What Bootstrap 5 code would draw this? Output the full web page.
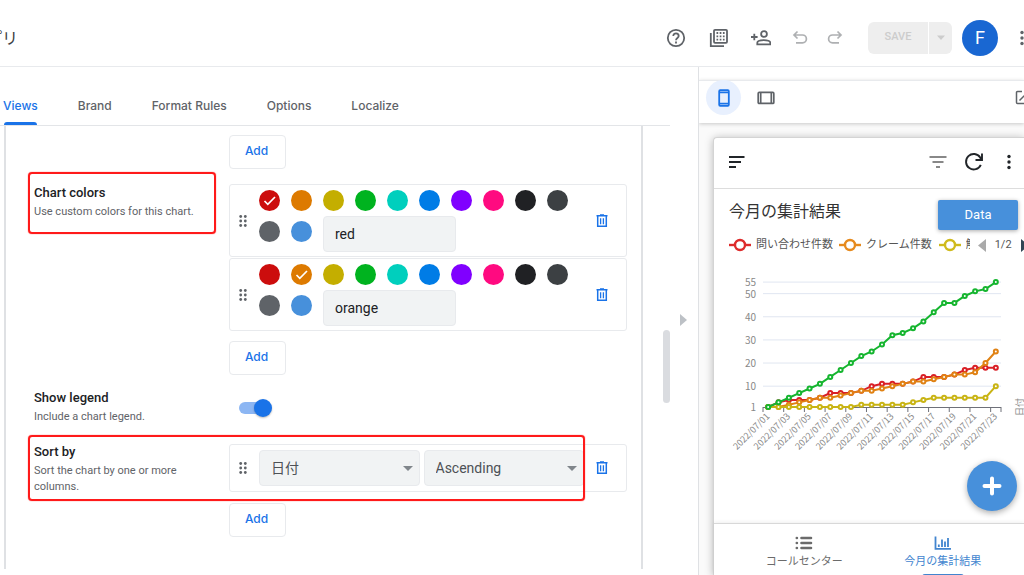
<!DOCTYPE html>
<html lang="ja">
<head>
<meta charset="utf-8">
<meta name="viewport" content="width=device-width, initial-scale=1">
<title>アプリ</title>
<link href="https://cdn.jsdelivr.net/npm/bootstrap@5.3.0/dist/css/bootstrap.min.css" rel="stylesheet">
<style>
  :root { --ink: #202124; --muted: #5f6368; --blue: #1a73e8; --line: #e8eaed; --app: #4790db; }
  body { font-family: Roboto, "Noto Sans CJK JP", sans-serif; color: var(--ink); font-size: 13px; background: #fff; }
  svg { display: block; flex: none; }
  .icon-btn { padding: 0; border: 0; background: none; color: var(--muted); line-height: 1; }
  .topbar { height: 67px; border-bottom: 1px solid var(--line); padding-top: 9px; }
  .app-title { width: 20px; font-size: 16px; color: #3c4043; padding: 2px 2px 0 0; }
  .save-btn { height: 32px; background: #eee; color: #ccc; font-size: 11px; font-weight: 500; border: 0; }
  .avatar { width: 36px; height: 36px; background: #1967d2; font-size: 18px; margin-left: 10px; border: 0; }

  .editor { min-width: 0; }
  .tabs { height: 59px; margin-right: 28px; border-bottom: 1px solid #e3e5e8; padding-top: 12px; }
  .tabs .nav-link { font: 500 12px/20px Inter, sans-serif; color: var(--muted); padding: 17px 0 9px; margin: 0 20px; position: relative; }
  .tabs .nav-item:first-child .nav-link { margin-left: 3px; }
  .tabs .nav-link.active { color: var(--blue); }
  .tabs .nav-link.active::after { content: ""; position: absolute; left: 1px; right: 1px; bottom: 0; height: 3px; background: var(--blue); border-radius: 3px 3px 0 0; }
  .panel { margin: 0 55px 6px 4px; border: solid #dfe1e4; border-width: 0 2px; padding: 9px 14px 32px 28px; }
  .setting-label { width: 195px; flex: none; }
  .setting-label h2 { font-size: 13px; line-height: 18px; font-weight: 500; margin: 0 0 2px; }
  .setting-label p { font-size: 11px; line-height: 16px; color: var(--muted); margin: 0; padding-right: 20px; }
  .add-btn { width: 57px; height: 34px; border: 1px solid var(--line); border-radius: 4px; background: #fff; color: var(--blue); font: 500 12px/20px Inter, sans-serif; padding: 0 2px 2px 0; }
  .item { border: 1px solid var(--line); border-radius: 3px; }
  .item + .item { margin-top: 1px; }
  .grip { width: 29px; flex: none; color: var(--muted); padding-left: 9px; }
  .swatches { width: 324px; padding-bottom: 4px; }
  .swatch { appearance: none; width: 21px; height: 21px; border-radius: 50%; margin: 5px 11px 5px 0; background: var(--c); }
  .swatch:checked { background: url("data:image/svg+xml,%3Csvg xmlns='http://www.w3.org/2000/svg' viewBox='0 0 21 21'%3E%3Cpath d='M5.5 11l3.300 3.300L16 7' fill='none' stroke='%23fff' stroke-width='1.700'/%3E%3C/svg%3E") center/21px, var(--c); }
  .field { height: 36px; background-color: #f1f3f4; border: 1px solid var(--line); border-radius: 4px; font-size: 14px; color: var(--ink); padding: 0 11px; }
  .color-name { width: 133px; }
  .select-box { flex: 1 1 0; min-width: 0; color: #4d5156; appearance: none; background-image: url("data:image/svg+xml,%3Csvg xmlns='http://www.w3.org/2000/svg' viewBox='0 0 10 5'%3E%3Cpath d='M0 0h10L5 5z' fill='%2380868b'/%3E%3C/svg%3E"); background-size: 10px 5px; background-repeat: no-repeat; background-position: right 6px center; }
  .trash { width: 24px; height: 24px; margin-right: 12px; color: var(--blue); }
  .toggle { appearance: none; width: 32px; height: 12px; border-radius: 6px; background: #8cb6f3; position: relative; margin: 2px 0 0 10px; }
  .toggle::before { content: ""; position: absolute; right: -1px; top: -3px; width: 18px; height: 18px; border-radius: 50%; background: var(--blue); box-shadow: 0 1px 2px #0004; }
  .callout { position: absolute; border: 2px solid #ff1a1a; border-radius: 4px; pointer-events: none; box-shadow: 0 0 1px #ff1a1a; }
  .callout-label { inset: -12px auto auto -6px; width: 188px; height: 62px; }
  .callout-row { inset: -8px 42px auto -6px; height: 66px; }
  .scroll-thumb { position: absolute; right: 28px; top: 263px; width: 7px; height: 73px; border-radius: 4px; background: #dadce0; }
  .collapse-arrow { position: absolute; right: 11px; top: 247px; color: #bdc1c6; }

  .preview { width: 326px; flex: none; border-left: 1px solid #dfe1e4; background: #fafafa; }
  .preview-bar { margin-top: 13px; height: 43px; border-top: 1px solid var(--line); padding: 0 0 9px 7px; background: #fff; box-shadow: 0 1px 4px #0003; position: relative; }
  .device-on { width: 35px; height: 35px; background: #e8f0fe; color: var(--blue); margin-right: 16px; }
  .phone { margin: 14px 0 0 14px; background: #fff; border: solid #d4d4d4; border-width: 1px 0 0 1px; border-radius: 4px 0 0 0; box-shadow: 0 1px 8px #0004; position: relative; }
  .phone-bar { height: 51px; border-bottom: 1px solid #ddd; padding: 0 12px 2px 15px; }
  .chart-title { font-size: 16px; line-height: 24px; font-weight: 400; color: #333; margin: 1px 0 0; }
  .data-btn { width: 80px; height: 30px; margin-top: 1px; background: var(--app); color: #fff; border: 0; border-radius: 2px; box-shadow: 0 1px 4px #0005; font-size: 13px; }
  .legend-row { font-size: 11px; line-height: 16px; color: #555; padding-left: 15px; }
  .legend-row svg { margin-right: 5px; }
  .clipped { width: 4px; overflow: hidden; }
  .chart { width: 100%; height: 261px; }
  .chart text { font: 10px "Noto Sans CJK JP", sans-serif; fill: #888; }
  .chart .date { font-size: 9px; }
  .fab { position: absolute; right: 7px; bottom: 64px; width: 50px; height: 50px; background: var(--app); border: 0; color: #fff; box-shadow: 0 2px 6px #0005; }
  .phone-tabs { border-top: 1px solid #d8d8d8; box-shadow: 0 -1px 4px #0001; padding: 0 12px 0 21px; height: 52px; }
  .phone-tabs a { flex: 1; text-decoration: none; color: #6b6b6b; font-size: 11px; line-height: 16px; padding-top: 11px; }
  .phone-tabs span { margin-top: 3px; }
  .phone-tabs a.current { color: #4285cf; }
  .phone-tabs a.current::after { content: ""; width: 42px; height: 3px; margin-top: 4px; background: currentColor; border-radius: 3px 3px 0 0; flex: none; }
</style>
</head>
<body class="vh-100 d-flex flex-column overflow-hidden">

<svg class="d-none">
  <symbol id="grip" viewBox="0 0 8 14"><g fill="currentColor"><circle cx="1.700" cy="2.500" r="1.400"/><circle cx="6.300" cy="2.500" r="1.400"/><circle cx="1.700" cy="7" r="1.400"/><circle cx="6.300" cy="7" r="1.400"/><circle cx="1.700" cy="11.500" r="1.400"/><circle cx="6.300" cy="11.500" r="1.400"/></g></symbol>
  <symbol id="trash" viewBox="0 0 12 14"><path d="M.5 1.700h11M4 .9h4M1.700 2v10.300h8.600V2" fill="none" stroke="currentColor" stroke-width="1.500"/><path d="M4.600 4.300v6M7.400 4.300v6" stroke="currentColor" stroke-width="1.300"/></symbol>
  <symbol id="dots" viewBox="0 0 6 16"><g fill="currentColor"><circle cx="3" cy="2.500" r="1.700"/><circle cx="3" cy="8" r="1.700"/><circle cx="3" cy="13.500" r="1.700"/></g></symbol>
</svg>

<header class="topbar d-flex align-items-center overflow-hidden flex-shrink-0">
  <div class="app-title d-flex justify-content-end overflow-hidden text-nowrap">アプリ</div>
  <div class="ms-auto d-flex align-items-center">
    <button class="icon-btn" aria-label="Help"><svg width="20" height="20" viewBox="0 0 20 20" fill="none" stroke="currentColor" stroke-width="1.800"><circle cx="10" cy="10" r="8.200"/><path d="M7.300 8c0-3.500 5.400-3.400 5.400 0 0 1.900-2.700 2-2.700 4.200M10 13.500v1.900"/></svg></button>
    <button class="icon-btn" aria-label="Data" style="margin-left:23px"><svg width="20" height="20" viewBox="0 0 20 20" fill="none" stroke="currentColor" stroke-width="1.800"><rect x="5" y="1.800" width="13" height="13" rx="1"/><path d="M1.800 5v13.200H15"/><path d="M7.500 5h9M7.500 8.300h9M7.500 11.600h9" stroke-dasharray="1.700 1.500"/></svg></button>
    <button class="icon-btn" aria-label="Share" style="margin-left:22px"><svg width="20" height="20" viewBox="0 0 20 20" fill="none" stroke="currentColor" stroke-width="1.800"><circle cx="13" cy="6" r="2.900"/><path d="M6.300 16.300v-1.500c0-3.700 13-3.700 13 0v1.500zM0 9h6.600M3.300 5.700v6.600"/></svg></button>
    <button class="icon-btn opacity-50" aria-label="Undo" style="margin-left:21px"><svg width="16" height="16" viewBox="0 0 16 16" fill="none" stroke="currentColor" stroke-width="1.700"><path d="M5.500 1.500L2 5l3.500 3.500M2 5h8.500a3.900 3.900 0 0 1 0 7.800H4"/></svg></button>
    <button class="icon-btn opacity-50" aria-label="Redo" style="margin-left:19px"><svg width="16" height="16" viewBox="0 0 16 16" fill="none" stroke="currentColor" stroke-width="1.700"><path d="M10.500 1.500L14 5l-3.500 3.500M14 5H5.500a3.900 3.900 0 0 0 0 7.800H12"/></svg></button>
    <div class="d-flex" style="margin-left:25px">
      <button class="save-btn rounded-start" style="width:60px">SAVE</button>
      <button class="save-btn rounded-end border-start border-white d-flex align-items-center justify-content-center" style="width:24px" aria-label="Save options"><svg width="8" height="5" viewBox="0 0 8 5"><path d="M0 .5h8L4 5z" fill="#ccc"/></svg></button>
    </div>
    <button class="avatar rounded-circle text-white p-0">F</button>
    <button class="icon-btn" aria-label="More" style="margin:0 -1px 0 21px"><svg width="6" height="16"><use href="#dots"/></svg></button>
  </div>
</header>

<div class="d-flex flex-grow-1 overflow-hidden">
  <main class="editor flex-grow-1 position-relative">
    <ul class="tabs nav flex-nowrap text-nowrap">
      <li class="nav-item"><a class="nav-link active" href="#">Views</a></li>
      <li class="nav-item"><a class="nav-link" href="#">Brand</a></li>
      <li class="nav-item"><a class="nav-link" href="#">Format Rules</a></li>
      <li class="nav-item"><a class="nav-link" href="#">Options</a></li>
      <li class="nav-item"><a class="nav-link" href="#">Localize</a></li>
    </ul>

    <div class="panel">
      <div class="d-flex"><div class="setting-label"></div><button class="add-btn">Add</button></div>

      <section class="d-flex position-relative" style="margin-top:15px">
        <div class="setting-label"><h2>Chart colors</h2><p class="text-nowrap">Use custom colors for this chart.</p></div>
        <div class="flex-grow-1">
          <div class="item d-flex align-items-center">
            <div class="grip"><svg width="8" height="14"><use href="#grip"/></svg></div>
            <div class="swatches d-flex flex-wrap align-items-start" data-picked="0"><input class="field color-name" aria-label="Color 1" value="red"></div>
            <button class="icon-btn trash ms-auto d-flex align-items-center justify-content-center" aria-label="Delete"><svg width="12" height="14"><use href="#trash"/></svg></button>
          </div>
          <div class="item d-flex align-items-center">
            <div class="grip"><svg width="8" height="14"><use href="#grip"/></svg></div>
            <div class="swatches d-flex flex-wrap align-items-start" data-picked="1"><input class="field color-name" aria-label="Color 2" value="orange"></div>
            <button class="icon-btn trash ms-auto d-flex align-items-center justify-content-center" aria-label="Delete"><svg width="12" height="14"><use href="#trash"/></svg></button>
          </div>
          <button class="add-btn d-block" style="margin-top:10px">Add</button>
        </div>
        <div class="callout callout-label"></div>
      </section>

      <section class="d-flex align-items-center" style="margin-top:14px">
        <div class="setting-label"><h2><label for="legend">Show legend</label></h2><p class="text-nowrap">Include a chart legend.</p></div>
        <input type="checkbox" role="switch" class="toggle" id="legend" checked>
      </section>

      <section class="d-flex position-relative" style="margin-top:18px">
        <div class="setting-label"><h2>Sort by</h2><p>Sort the chart by one or more columns.</p></div>
        <div class="flex-grow-1">
          <div class="item d-flex align-items-center" style="height:48px;margin-top:1px">
            <div class="grip"><svg width="8" height="14"><use href="#grip"/></svg></div>
            <div class="d-flex flex-grow-1 gap-1">
              <select class="field select-box" aria-label="Sort column"><option>日付</option></select>
              <select class="field select-box" aria-label="Sort order"><option>Ascending</option><option>Descending</option></select>
            </div>
            <button class="icon-btn trash d-flex align-items-center justify-content-center" style="margin-left:6px" aria-label="Delete"><svg width="12" height="14"><use href="#trash"/></svg></button>
          </div>
          <button class="add-btn d-block" style="margin-top:11px">Add</button>
        </div>
        <div class="callout callout-row"></div>
      </section>
    </div>
    <div class="scroll-thumb"></div>
    <button class="icon-btn collapse-arrow" aria-label="Collapse preview"><svg width="7" height="12" viewBox="0 0 7 12"><path d="M0 0v12l7-6z" fill="currentColor"/></svg></button>
  </main>

  <aside class="preview d-flex flex-column overflow-hidden">
    <div class="bg-white">
      <div class="preview-bar d-flex align-items-center">
        <button class="icon-btn device-on rounded-circle d-flex align-items-center justify-content-center" aria-label="Phone"><svg width="12" height="18" viewBox="0 0 12 18" fill="none" stroke="currentColor" stroke-width="1.800"><rect x="1.200" y="1.200" width="9.600" height="15.600" rx="1"/><path d="M1 3.300h10M1 14.700h10"/></svg></button>
        <button class="icon-btn" aria-label="Tablet"><svg width="18" height="14" viewBox="0 0 18 14" fill="none" stroke="currentColor" stroke-width="1.700"><rect x="1.200" y="1.400" width="15.600" height="11" rx="1"/><path d="M3.700 1v12M14.300 1v12"/></svg></button>
        <button class="icon-btn ms-auto" style="margin-right:-6px" aria-label="Open in new window"><svg width="15" height="15" viewBox="0 0 15 15" fill="none" stroke="currentColor" stroke-width="1.500"><path d="M7 1.500H2.500a1 1 0 0 0-1 1v10a1 1 0 0 0 1 1h10a1 1 0 0 0 1-1V8M4.500 10.500l9-9M9 1.500h4.500V6"/></svg></button>
      </div>
    </div>
    <div class="phone flex-grow-1 d-flex flex-column">
      <div class="phone-bar d-flex align-items-center">
        <button class="icon-btn text-dark" aria-label="Menu"><svg width="16" height="14" viewBox="0 0 16 14" stroke="currentColor" stroke-width="2"><path d="M0 2h15.500M0 7h12M0 12h7"/></svg></button>
        <button class="icon-btn ms-auto" aria-label="Filter"><svg width="18" height="14" viewBox="0 0 18 14" stroke="#888" stroke-width="2"><path d="M.5 2h17M3.500 7h11M7 12h4"/></svg></button>
        <button class="icon-btn text-dark" style="margin-left:17px" aria-label="Refresh"><svg width="20" height="20" viewBox="0 0 20 20" fill="none" stroke="currentColor" stroke-width="1.900"><path d="M16.800 12.800a7.700 7.700 0 1 1-.6-7.300L17.500 8M11.500 8h6.500V1.500"/></svg></button>
        <button class="icon-btn text-dark" style="margin-left:22px" aria-label="More"><svg width="6" height="16"><use href="#dots"/></svg></button>
      </div>
      <div class="d-flex justify-content-between" style="padding:10px 6px 0 15px">
        <h1 class="chart-title">今月の集計結果</h1>
        <button class="data-btn">Data</button>
      </div>
      <div class="legend-row d-flex align-items-center text-nowrap overflow-hidden" style="margin-top:7px">
        <svg width="22" height="14" viewBox="0 0 22 14" fill="#fff" stroke="#dd2b2b" stroke-width="2.400"><path d="M0 7h22"/><circle cx="11" cy="7" r="5"/></svg><span>問い合わせ件数</span>
        <svg style="margin-left:6px" width="22" height="14" viewBox="0 0 22 14" fill="#fff" stroke="#e68a1e" stroke-width="2.400"><path d="M0 7h22"/><circle cx="11" cy="7" r="5"/></svg><span>クレーム件数</span>
        <svg style="margin-left:7px" width="22" height="14" viewBox="0 0 22 14" fill="#fff" stroke="#cfba1c" stroke-width="2.400"><path d="M0 7h22"/><circle cx="11" cy="7" r="5"/></svg><span class="clipped flex-shrink-0">解</span>
        <svg style="margin:0 9px 0 8px" width="8" height="13" viewBox="0 0 8 13"><path d="M8 0v13L0 6.500z" fill="#aaa"/></svg><span class="flex-shrink-0">1/2</span>
        <svg style="margin:0 0 0 9px" width="8" height="13" viewBox="0 0 8 13"><path d="M0 0v13l8-6.500z" fill="#2f4554"/></svg>
      </div>
      <svg class="chart" id="chart" viewBox="714 253 310 261" preserveAspectRatio="xMinYMin meet" role="img" aria-label="今月の集計結果"></svg>
      <button class="fab rounded-circle d-flex align-items-center justify-content-center" aria-label="Add"><svg width="20" height="20" viewBox="0 0 20 20" stroke="currentColor" stroke-width="4" stroke-linecap="round"><path d="M10 2.500v15M2.500 10h15"/></svg></button>
      <nav class="phone-tabs d-flex mt-auto flex-shrink-0">
        <a href="#" class="d-flex flex-column align-items-center"><svg width="18" height="16" viewBox="0 0 18 16" stroke="currentColor" stroke-width="2.600" stroke-linecap="round"><path d="M6.500 3h9.500M6.500 8h9.500M6.500 13h9.500M1.800 3h.1M1.800 8h.1M1.800 13h.1"/></svg><span>コールセンター</span></a>
        <a href="#" class="current d-flex flex-column align-items-center"><svg width="18" height="16" viewBox="0 0 18 16" fill="none" stroke="currentColor" stroke-width="1.800"><path d="M1.500 1.500v12.300H17M4.800 12v-2.500M8 12V4.500M11 12V6.500M14 12V3"/></svg><span>今月の集計結果</span></a>
      </nav>
    </div>
  </aside>
</div>

<script src="https://cdn.jsdelivr.net/npm/bootstrap@5.3.0/dist/js/bootstrap.bundle.min.js"></script>
<script>
  // Colour palette offered for every series
  const palette = ['#cc0d0d', '#dd7a00', '#c4ae00', '#00b31f', '#00cfbd', '#007ce6', '#8000ff', '#ff0a80', '#202124', '#3c4043', '#5f6368', '#4790db'];
  document.querySelectorAll('.swatches').forEach((box, n) => {
    const html = palette.map((c, i) => `<input type="radio" class="swatch" name="series${n}" aria-label="${c}" style="--c:${c}"${i == box.dataset.picked ? ' checked' : ''}>`).join('');
    box.insertAdjacentHTML('afterbegin', html);
  });

  // Line chart
  const step = 238 / 23, x = i => 763 + step * (i + .5), y = v => 409.3 - 2.313 * v;
  const series = [
    ['#d91f26', [1,3,4,4,4,5,7,7,7,8,10,11,11,11,12,14,14,14,15,17,18,18,18]],
    ['#e08214', [1,1,2,3,4,5,5,6,7,8,8,9,10,11,12,12,13,14,15,15,16,20,25]],
    ['#c9b414', [1,1,1,1,1,1,1,1,1,2,2,2,2,2,3,4,5,5,5,5,5,5,10]],
    ['#15b52f', [1,3,5,7,9,11,14,17,20,23,25,28,32,33,35,38,42,46,46,49,51,52,55]]
  ];
  let out = '';
  [55, 50, 40, 30, 20, 10, 1].forEach(v => {
    out += `<text x="756" y="${y(v) + 4}" text-anchor="end">${v}</text>`;
    if (v > 1) out += `<path d="M763 ${y(v)}H1001" stroke="#e0e6f1"/>`;
  });
  out += '<path d="M763 407.500H1001" stroke="#6e7079"/>';
  for (let i = 0; i <= 24; i += 2) {
    const tx = 763 + step * Math.min(i, 23);
    out += `<path d="M${tx} 407v5" stroke="#6e7079"/>`;
    if (i < 23) out += `<text class="date" transform="translate(${x(i) + 2} 417) rotate(-45)" text-anchor="end">2022/07/${String(i + 1).padStart(2, '0')}</text>`;
  }
  series.forEach(([c, vals]) => {
    out += `<polyline points="${vals.map((v, i) => x(i) + ',' + y(v)).join(' ')}" fill="none" stroke="${c}" stroke-width="2"/>`;
    out += vals.map((v, i) => `<circle cx="${x(i)}" cy="${y(v)}" r="2" fill="#fff" stroke="${c}" stroke-width="2"/>`).join('');
  });
  out += '<text class="date" transform="translate(1023 416) rotate(-90)">日付</text>';
  document.getElementById('chart').innerHTML = out;
</script>
</body>
</html>
